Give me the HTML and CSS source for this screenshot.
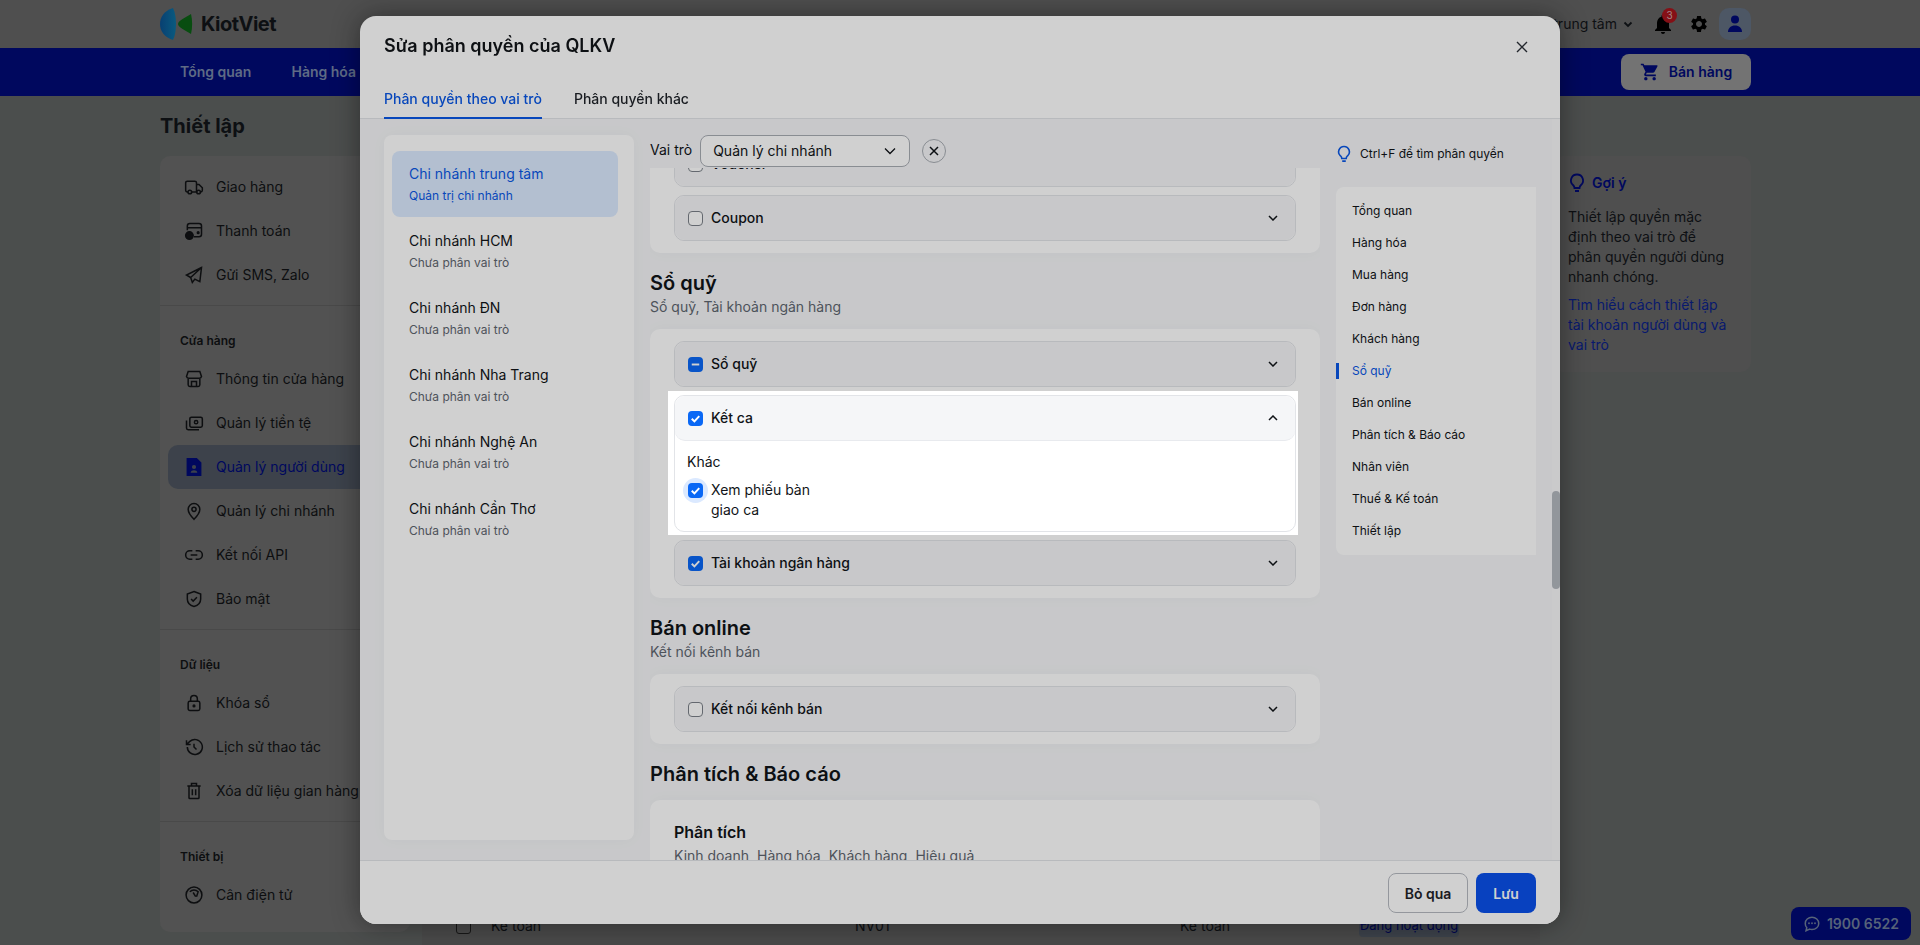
FILE: index.html
```html
<!DOCTYPE html>
<html lang="vi">
<head>
    <meta charset="UTF-8">
    <title>KiotViet - Thiết lập</title>
    <link rel="stylesheet" href="styles.css">
</head>
<body>
    <!-- page behind the dialog -->
    <div class="topbar">
        <div class="logo">
            <svg width="34" height="32" viewBox="0 0 34 32">
                <defs>
                    <linearGradient id="lensBlue" x1="0" y1="0" x2="1" y2="0">
                        <stop offset="0" stop-color="#0b4f8c"/>
                        <stop offset="1" stop-color="#0d6f9c"/>
                    </linearGradient>
                </defs>
                <path d="M13 0C4 3 0 9 0 16s4 13 13 16c4-8 4-24 0-32z" fill="url(#lensBlue)"/>
                <path d="M31 6c-5 3-13 7-13 10s8 7 13 10c1.500-6 1.500-14 0-20z" fill="#0b5f14"/>
            </svg>
            <span class="logo-text">KiotViet</span>
        </div>
        <div class="top-right">
            <span class="branch">Chi nhánh trung tâm
                <svg width="12" height="12" viewBox="0 0 12 12"><path d="M2.500 4.500l3.500 3.500 3.500-3.500" fill="none" stroke="currentColor" stroke-width="1.800"/></svg>
            </span>
            <span class="bell">
                <svg width="24" height="24" viewBox="0 0 24 24"><path d="M12 22c1.1 0 2-.9 2-2h-4c0 1.1.89 2 2 2zm6-6v-5c0-3.07-1.64-5.64-4.5-6.32V4c0-.83-.67-1.5-1.5-1.5s-1.5.67-1.5 1.5v.68C7.63 5.36 6 7.92 6 11v5l-2 2v1h16v-1l-2-2z"/></svg>
                <span class="badge">3</span>
            </span>
            <svg class="gear" width="20" height="20" viewBox="0 0 24 24"><path d="M19.14 12.94c.04-.3.06-.61.06-.94 0-.32-.02-.64-.07-.94l2.03-1.58a.49.49 0 0 0 .12-.61l-1.92-3.32a.488.488 0 0 0-.59-.22l-2.39.96c-.5-.38-1.03-.7-1.62-.94l-.36-2.54a.484.484 0 0 0-.48-.41h-3.84c-.24 0-.43.17-.47.41l-.36 2.54c-.59.24-1.13.57-1.62.94l-2.39-.96c-.22-.08-.47 0-.59.22L2.74 8.87c-.12.21-.08.47.12.61l2.03 1.58c-.05.3-.09.63-.09.94s.02.64.07.94l-2.03 1.58a.49.49 0 0 0-.12.61l1.92 3.32c.12.22.37.29.59.22l2.39-.96c.5.38 1.03.7 1.62.94l.36 2.54c.05.24.24.41.48.41h3.84c.24 0 .44-.17.47-.41l.36-2.54c.59-.24 1.13-.56 1.62-.94l2.39.96c.22.08.47 0 .59-.22l1.92-3.32c.12-.22.07-.47-.12-.61l-2.01-1.58zM12 15.6c-1.98 0-3.6-1.62-3.6-3.6s1.62-3.6 3.6-3.6 3.6 1.62 3.6 3.6-1.62 3.6-3.6 3.6z"/></svg>
            <span class="avatar">
                <svg width="20" height="20" viewBox="0 0 20 20"><circle cx="10" cy="5.500" r="4"/><path d="M3 18c0-4 3-6.500 7-6.500s7 2.500 7 6.500z"/></svg>
            </span>
        </div>
    </div>

    <div class="navbar">
        <a class="nav-link">Tổng quan</a>
        <a class="nav-link">Hàng hóa</a>
        <span class="sell-btn">
            <svg width="20" height="20" viewBox="0 0 24 24"><path d="M7 18c-1.100 0-1.990.9-1.990 2S5.900 22 7 22s2-.9 2-2-.9-2-2-2zM1 2v2h2l3.600 7.590-1.350 2.450c-.16.28-.25.61-.25.96 0 1.100.9 2 2 2h12v-2H7.420c-.14 0-.25-.11-.25-.25l.03-.12.9-1.630h7.450c.75 0 1.410-.41 1.750-1.030l3.580-6.490A1 1 0 0 0 20 4H5.210l-.94-2H1zm16 16c-1.100 0-1.990.9-1.990 2s.89 2 1.990 2 2-.9 2-2-.9-2-2-2z"/></svg>
            Bán hàng
        </span>
    </div>

    <div class="page">
        <h1 class="page-title">Thiết lập</h1>
        <div class="page-grid">
            <div class="side-card">
                <div class="side-group first">
                    <div class="side-item">
                        <svg class="ico" viewBox="0 0 24 24"><path d="M5 18H4a2 2 0 0 1-2-2V7a2 2 0 0 1 2-2h9a2 2 0 0 1 2 2v11H9M15 9h3l4 4v3a2 2 0 0 1-2 2M15 18h-1"/><circle cx="7" cy="18" r="2.200"/><circle cx="17.500" cy="18" r="2.200"/></svg>
                        Giao hàng
                    </div>
                    <div class="side-item">
                        <svg class="ico" viewBox="0 0 24 24"><path d="M4 11V6a3 3 0 0 1 3-3h11a3 3 0 0 1 3 3v10a3 3 0 0 1-3 3h-6M4 8h17"/><circle cx="6.500" cy="17.500" r="4.500" fill="currentColor"/><circle cx="17" cy="14" r="1"/></svg>
                        Thanh toán
                    </div>
                    <div class="side-item">
                        <svg class="ico" viewBox="0 0 24 24"><path d="M21 3L3 12l5 3 2 6 3-4 6 3zM8 15L21 3"/></svg>
                        Gửi SMS, Zalo
                    </div>
                </div>
                <div class="side-group">
                    <div class="side-label">Cửa hàng</div>
                    <div class="side-item">
                        <svg class="ico" viewBox="0 0 24 24"><path d="M5 3h14l2 6a3 3 0 0 1-3 2H6a3 3 0 0 1-3-2zM5 11v8a2 2 0 0 0 2 2h10a2 2 0 0 0 2-2v-8M9 21v-6h6v6"/></svg>
                        Thông tin cửa hàng
                    </div>
                    <div class="side-item">
                        <svg class="ico" viewBox="0 0 24 24"><rect x="7" y="5" width="15" height="12" rx="2"/><circle cx="14.500" cy="11" r="2"/><path d="M3 9v9a2 2 0 0 0 2 2h13"/></svg>
                        Quản lý tiền tệ
                    </div>
                    <div class="side-item active">
                        <svg class="ico" viewBox="0 0 24 24"><path class="solid" d="M4 2h11l5 5v15H4z"/><circle cx="12" cy="12" r="2.500" fill="#4b525d" stroke="none"/><path d="M8 19c0-4 8-4 8 0z" fill="#4b525d" stroke="none"/></svg>
                        Quản lý người dùng
                    </div>
                    <div class="side-item">
                        <svg class="ico" viewBox="0 0 24 24"><path d="M12 22s-7-7-7-12a7 7 0 0 1 14 0c0 5-7 12-7 12z"/><circle cx="12" cy="10" r="2.500"/></svg>
                        Quản lý chi nhánh
                    </div>
                    <div class="side-item">
                        <svg class="ico" viewBox="0 0 24 24"><path d="M10 7H7a5 5 0 0 0 0 10h3M14 7h3a5 5 0 0 1 0 10h-3M8 12h8"/></svg>
                        Kết nối API
                    </div>
                    <div class="side-item">
                        <svg class="ico" viewBox="0 0 24 24"><path d="M12 3l8 3v6c0 5-4 8-8 9-4-1-8-4-8-9V6zM8.500 12l2.500 2.500 4.500-4.500"/></svg>
                        Bảo mật
                    </div>
                </div>
                <div class="side-group">
                    <div class="side-label">Dữ liệu</div>
                    <div class="side-item">
                        <svg class="ico" viewBox="0 0 24 24"><rect x="5" y="10" width="14" height="11" rx="2"/><path d="M8 10V7a4 4 0 0 1 8 0v3"/><circle cx="12" cy="15.500" r="1"/></svg>
                        Khóa sổ
                    </div>
                    <div class="side-item">
                        <svg class="ico" viewBox="0 0 24 24"><path d="M4 12a9 9 0 1 0 3-6.700L3 9M3 4v5h5M12 8v4l3 3"/></svg>
                        Lịch sử thao tác
                    </div>
                    <div class="side-item">
                        <svg class="ico" viewBox="0 0 24 24"><path d="M4 6h16M9 6V3h6v3M6 6v14a1 1 0 0 0 1 1h10a1 1 0 0 0 1-1V6M10 10v7M14 10v7"/></svg>
                        Xóa dữ liệu gian hàng
                    </div>
                </div>
                <div class="side-group last">
                    <div class="side-label">Thiết bị</div>
                    <div class="side-item">
                        <svg class="ico" viewBox="0 0 24 24"><circle cx="12" cy="12" r="9.500"/><path d="M7 8a7 7 0 0 1 10 0l-2 6M11 9l3 5"/></svg>
                        Cân điện tử
                    </div>
                </div>
            </div>

            <div class="table-card">
                <div class="table-row">
                    <span class="row-check"></span>
                    <span class="row-name">Kế toán</span>
                    <span class="row-code">NV01</span>
                    <span class="row-role">Kế toán</span>
                    <span class="row-status">Đang hoạt động</span>
                </div>
            </div>

            <div class="hint-card">
                <div class="hint-title">
                    <svg width="18" height="20" viewBox="0 0 18 20"><path d="M9 1.500a6 6 0 0 0-4 10.500c1 1 1.500 2 1.500 3h5c0-1 .5-2 1.500-3A6 6 0 0 0 9 1.500zM7 18h4" fill="none" stroke="currentColor" stroke-width="1.800"/></svg>
                    Gợi ý
                </div>
                <p class="hint-text">Thiết lập quyền mặc định theo vai trò để phân quyền người dùng nhanh chóng.</p>
                <a class="hint-link">Tìm hiểu cách thiết lập tài khoản người dùng và vai trò</a>
            </div>
        </div>
    </div>

    <div class="phone-btn">
        <svg width="18" height="18" viewBox="0 0 24 24"><path d="M12 3c5 0 9 3.600 9 8.200s-4 8.200-9 8.200c-1 0-2-.1-3-.5L4 21l1-4.200C3.700 15.400 3 13.400 3 11.200 3 6.600 7 3 12 3z" fill="none" stroke="currentColor" stroke-width="2"/><circle cx="8" cy="11" r="1.200" fill="currentColor"/><circle cx="12" cy="11" r="1.200" fill="currentColor"/><circle cx="16" cy="11" r="1.200" fill="currentColor"/></svg>
        1900 6522
    </div>

    <!-- dialog -->
    <div class="modal">
        <div class="modal-head">
            <h2 class="modal-title">Sửa phân quyền của QLKV</h2>
            <svg class="modal-close" width="14" height="14" viewBox="0 0 14 14"><path d="M2 2l10 10M12 2L2 12" fill="none" stroke="currentColor" stroke-width="1.400"/></svg>
            <div class="tabs">
                <div class="tab active">Phân quyền theo vai trò</div>
                <div class="tab">Phân quyền khác</div>
            </div>
        </div>

        <div class="modal-body">
            <div class="branch-list">
                <div class="branch-item active"><div class="branch-name">Chi nhánh trung tâm</div><div class="branch-role">Quản trị chi nhánh</div></div>
                <div class="branch-item"><div class="branch-name">Chi nhánh HCM</div><div class="branch-role">Chưa phân vai trò</div></div>
                <div class="branch-item"><div class="branch-name">Chi nhánh ĐN</div><div class="branch-role">Chưa phân vai trò</div></div>
                <div class="branch-item"><div class="branch-name">Chi nhánh Nha Trang</div><div class="branch-role">Chưa phân vai trò</div></div>
                <div class="branch-item"><div class="branch-name">Chi nhánh Nghệ An</div><div class="branch-role">Chưa phân vai trò</div></div>
                <div class="branch-item"><div class="branch-name">Chi nhánh Cần Thơ</div><div class="branch-role">Chưa phân vai trò</div></div>
            </div>

            <div class="perm-col">
                <div class="role-bar">
                    <span class="role-label">Vai trò</span>
                    <div class="role-select">
                        Quản lý chi nhánh
                        <svg width="14" height="14" viewBox="0 0 14 14"><path d="M2 4.500l5 5 5-5" fill="none" stroke="currentColor" stroke-width="1.300"/></svg>
                    </div>
                    <span class="role-clear">
                        <svg width="10" height="10" viewBox="0 0 10 10"><path d="M1 1l8 8M9 1L1 9" fill="none" stroke="currentColor" stroke-width="1.500"/></svg>
                    </span>
                </div>

                <div class="perm-scroll">
                    <div class="perm-card first">
                        <div class="acc">
                            <div class="acc-head"><span class="check"></span><span class="acc-label">Voucher</span><svg class="chev" viewBox="0 0 10 6"><path d="M1 1l4 4 4-4"/></svg></div>
                        </div>
                        <div class="acc">
                            <div class="acc-head"><span class="check"></span><span class="acc-label">Coupon</span><svg class="chev" viewBox="0 0 10 6"><path d="M1 1l4 4 4-4"/></svg></div>
                        </div>
                    </div>

                    <h3 class="sec-title">Sổ quỹ</h3>
                    <div class="sec-sub">Sổ quỹ, Tài khoản ngân hàng</div>
                    <div class="perm-card">
                        <div class="acc">
                            <div class="acc-head"><span class="check on"><svg viewBox="0 0 14 14"><path d="M3.500 7h7"/></svg></span><span class="acc-label">Sổ quỹ</span><svg class="chev" viewBox="0 0 10 6"><path d="M1 1l4 4 4-4"/></svg></div>
                        </div>
                        <div class="acc open">
                            <div class="acc-head"><span class="check on"><svg viewBox="0 0 14 14"><path d="M3.500 7.200l2.500 2.500 4.500-5"/></svg></span><span class="acc-label">Kết ca</span><svg class="chev" viewBox="0 0 10 6"><path d="M1 5l4-4 4 4"/></svg></div>
                            <div class="acc-body">
                                <div class="acc-group">Khác</div>
                                <div class="perm-opt">
                                    <span class="check on halo"><svg viewBox="0 0 14 14"><path d="M3.500 7.200l2.500 2.500 4.500-5"/></svg></span>
                                    <span class="opt-text">Xem phiếu bàn giao ca</span>
                                </div>
                            </div>
                        </div>
                        <div class="acc">
                            <div class="acc-head"><span class="check on"><svg viewBox="0 0 14 14"><path d="M3.500 7.200l2.500 2.500 4.500-5"/></svg></span><span class="acc-label">Tài khoản ngân hàng</span><svg class="chev" viewBox="0 0 10 6"><path d="M1 1l4 4 4-4"/></svg></div>
                        </div>
                    </div>

                    <h3 class="sec-title">Bán online</h3>
                    <div class="sec-sub">Kết nối kênh bán</div>
                    <div class="perm-card">
                        <div class="acc">
                            <div class="acc-head"><span class="check"></span><span class="acc-label">Kết nối kênh bán</span><svg class="chev" viewBox="0 0 10 6"><path d="M1 1l4 4 4-4"/></svg></div>
                        </div>
                    </div>

                    <h3 class="sec-title">Phân tích &amp; Báo cáo</h3>
                    <div class="perm-card plain">
                        <div class="plain-title">Phân tích</div>
                        <div class="plain-sub">Kinh doanh, Hàng hóa, Khách hàng, Hiệu quả</div>
                    </div>
                </div>
            </div>

            <div class="jump-col">
                <div class="jump-tip">
                    <svg width="16" height="18" viewBox="0 0 18 20"><path d="M9 1.500a6 6 0 0 0-4 10.500c1 1 1.500 2 1.500 3h5c0-1 .5-2 1.500-3A6 6 0 0 0 9 1.500zM7 18h4" fill="none" stroke="currentColor" stroke-width="1.800"/></svg>
                    <span>Ctrl+F để tìm phân quyền</span>
                </div>
                <div class="jump-card">
                    <div class="jump-item">Tổng quan</div>
                    <div class="jump-item">Hàng hóa</div>
                    <div class="jump-item">Mua hàng</div>
                    <div class="jump-item">Đơn hàng</div>
                    <div class="jump-item">Khách hàng</div>
                    <div class="jump-item active">Sổ quỹ</div>
                    <div class="jump-item">Bán online</div>
                    <div class="jump-item">Phân tích &amp; Báo cáo</div>
                    <div class="jump-item">Nhân viên</div>
                    <div class="jump-item">Thuế &amp; Kế toán</div>
                    <div class="jump-item">Thiết lập</div>
                </div>
            </div>

            <div class="scrollbar"><div class="scroll-thumb"></div></div>
        </div>

        <div class="modal-foot">
            <button class="btn">Bỏ qua</button>
            <button class="btn primary">Lưu</button>
        </div>
    </div>

    <!-- tour highlight around Ket ca -->
    <div class="spot"></div>
</body>
</html>
```

FILE: styles.css
```css
* {
    margin: 0;
    padding: 0;
    box-sizing: border-box;
}

html, body {
    height: 945px;
    overflow: hidden;
}

body {
    background: #5d605f;
    font-family: Inter, "Noto Sans", sans-serif;
    font-size: 14px;
    line-height: 20px;
    color: #111418;
}

/* page behind the dialog */
.topbar {
    height: 48px;
    padding: 0 169px 0 160px;
    background: #616161;
    display: flex;
    align-items: center;
    justify-content: space-between;
}

.logo {
    display: flex;
    align-items: center;
    gap: 7px;
}

.logo-text {
    font-size: 20px;
    font-weight: 700;
    letter-spacing: -0.5px;
}

.top-right {
    display: flex;
    align-items: center;
}

.branch {
    display: flex;
    align-items: center;
    gap: 5px;
    margin-right: 17px;
}

.bell {
    position: relative;
    display: flex;
    margin-right: 14px;
}

.badge {
    position: absolute;
    top: -4px;
    right: -2px;
    width: 15px;
    height: 15px;
    border-radius: 50%;
    background: #a3141c;
    color: #c9a5a5;
    font-size: 10px;
    line-height: 15px;
    text-align: center;
}

.gear {
    margin-right: 10px;
}

.avatar {
    width: 32px;
    height: 32px;
    border-radius: 10px;
    background: #5f6b7c;
    display: flex;
    align-items: center;
    justify-content: center;
    fill: #000a74;
}

.navbar {
    height: 48px;
    padding: 0 169px 0 180px;
    background: #000a74;
    display: flex;
    align-items: center;
    gap: 40px;
}

.nav-link {
    color: #7483a3;
    font-weight: 600;
}

.sell-btn {
    margin-left: auto;
    width: 130px;
    height: 36px;
    border-radius: 8px;
    background: #8d8d8d;
    color: #000a74;
    font-weight: 600;
    fill: #000a74;
    display: flex;
    align-items: center;
    justify-content: center;
    gap: 9px;
}

.page {
    padding: 16px 169px 0 160px;
}

.page-title {
    font-size: 20px;
    line-height: 28px;
    font-weight: 700;
    margin-bottom: 16px;
}

.page-grid {
    display: grid;
    grid-template-columns: 250px 1118px 199px;
    column-gap: 12px;
    align-items: start;
}

.side-card {
    background: #656565;
    border-radius: 10px;
    color: #101214;
}

.side-group {
    padding: 25px 8px 8px;
    border-bottom: 1px solid #5a5a5a;
}

.side-group.first {
    padding-top: 9px;
}

.side-group.last {
    border-bottom: none;
    padding-bottom: 15px;
}

.side-label {
    padding-left: 12px;
    margin-bottom: 6px;
    font-size: 12px;
    font-weight: 600;
}

.side-item {
    height: 44px;
    padding-left: 16px;
    border-radius: 10px;
    display: flex;
    align-items: center;
    gap: 12px;
    white-space: nowrap;
}

.side-item.active {
    background: #4b525d;
    color: #000a74;
}

.ico {
    width: 20px;
    height: 20px;
    flex: none;
    fill: none;
    stroke: currentColor;
    stroke-width: 1.800;
}

.ico .solid {
    fill: currentColor;
}

.table-card {
    height: 792px;
    background: #5b5b5b;
    display: flex;
    align-items: flex-end;
}

.table-row {
    width: 100%;
    height: 44px;
    display: grid;
    grid-template-columns: 35px 364px 325px 179px auto;
    align-items: center;
    padding-left: 34px;
}

.row-check {
    width: 15px;
    height: 15px;
    border: 1px solid #1d1d1d;
    border-radius: 3px;
}

.row-status {
    width: 100px;
    height: 22px;
    background: #4b525d;
    border-radius: 4px;
    color: #00085f;
    font-size: 13px;
    text-align: center;
    white-space: nowrap;
}

.hint-card {
    height: 216px;
    padding: 17px 22px 16px 16px;
    background: #616161;
    border-radius: 10px;
}

.hint-title {
    display: flex;
    align-items: center;
    gap: 6px;
    margin-bottom: 14px;
    color: #000a74;
    font-weight: 600;
}

.hint-text {
    margin-bottom: 8px;
}

.hint-link {
    color: #0a1f86;
}

.phone-btn {
    position: fixed;
    left: 1791px;
    top: 907px;
    width: 120px;
    height: 33px;
    border-radius: 8px;
    background: #000a74;
    color: #6b7a95;
    font-weight: 600;
    display: flex;
    align-items: center;
    justify-content: center;
    gap: 6px;
}

/* dialog */
.modal {
    position: fixed;
    left: 360px;
    top: 16px;
    width: 1200px;
    height: 908px;
    background: #fff;
    border-radius: 16px;
    box-shadow: 0 0 28px rgba(0, 0, 0, 0.4);
    display: flex;
    flex-direction: column;
    overflow: hidden;
}

.modal-head {
    position: relative;
    padding: 16px 24px 0;
    border-bottom: 1px solid #e2e4e8;
}

.modal-title {
    font-size: 18px;
    line-height: 28px;
    font-weight: 600;
    margin-bottom: 21px;
}

.modal-close {
    position: absolute;
    right: 31px;
    top: 24px;
    color: #2a2f36;
}

.tabs {
    display: flex;
    gap: 32px;
    margin-bottom: -1px;
}

.tab {
    height: 38px;
    padding-top: 8px;
    font-weight: 500;
    color: #1f2329;
}

.tab.active {
    color: #0a58e6;
    border-bottom: 2px solid #0a58e6;
}

.modal-body {
    position: relative;
    flex: 1;
    min-height: 0;
    padding: 16px 24px 0;
    background: #f5f6f8;
    display: flex;
    gap: 16px;
}

.branch-list {
    width: 250px;
    height: 705px;
    padding: 16px 16px 0 8px;
    background: #fff;
    border-radius: 8px;
    box-shadow: 0 0 16px rgba(0, 0, 0, 0.03);
}

.branch-item {
    height: 67px;
    padding: 13px 17px 0;
}

.branch-item.active {
    height: 66px;
    margin-bottom: 1px;
    background: #dcebff;
    border-radius: 8px;
    color: #0a58e6;
}

.branch-name {
    margin-bottom: 3px;
}

.branch-role {
    font-size: 12px;
    line-height: 18px;
    color: #5f6670;
}

.active .branch-role {
    color: #0a58e6;
}

.perm-col {
    width: 670px;
    display: flex;
    flex-direction: column;
}

.role-bar {
    height: 33px;
    display: flex;
    align-items: flex-start;
    gap: 8px;
}

.role-label {
    line-height: 30px;
}

.role-select {
    width: 210px;
    height: 32px;
    padding: 0 12px;
    border: 1px solid #a9adb4;
    border-radius: 8px;
    background: #fff;
    display: flex;
    align-items: center;
    justify-content: space-between;
}

.role-clear {
    width: 24px;
    height: 24px;
    margin: 4px 0 0 4px;
    border: 1px solid #a9adb4;
    border-radius: 50%;
    background: #f5f6f8;
    display: flex;
    align-items: center;
    justify-content: center;
}

.perm-scroll {
    flex: 1;
    min-height: 0;
    overflow: hidden;
}

.perm-card {
    padding: 12px 24px;
    background: #fff;
    border-radius: 10px;
    box-shadow: 0 0 16px rgba(0, 0, 0, 0.03);
    display: flex;
    flex-direction: column;
    gap: 8px;
}

.perm-card.first {
    margin-top: -39px;
}

.perm-card.plain {
    display: block;
    padding-top: 20px;
    height: 120px;
}

.plain-title {
    font-size: 16px;
    line-height: 24px;
    font-weight: 600;
}

.plain-sub {
    margin-top: 2px;
    color: #5f6670;
}

.sec-title {
    margin-top: 16px;
    font-size: 20px;
    line-height: 28px;
    font-weight: 600;
}

.sec-sub {
    color: #5f6670;
}

.sec-title + .perm-card,
.sec-sub + .perm-card {
    margin-top: 12px;
}

.acc {
    border: 1px solid #e2e4e8;
    border-radius: 10px;
    background: #fff;
}

.acc-head {
    height: 44px;
    padding: 0 17px 0 13px;
    background: #f5f6f8;
    border-radius: 10px;
    display: flex;
    align-items: center;
    gap: 8px;
}

.acc.open .acc-head {
    height: 45px;
    border-bottom: 1px solid #e8eaee;
}

.acc-label {
    font-weight: 500;
    flex: 1;
}

.chev {
    width: 10px;
    height: 6px;
    fill: none;
    stroke: #111418;
    stroke-width: 1.500;
}

.check {
    position: relative;
    width: 15px;
    height: 15px;
    flex: none;
    border: 1px solid #7b8088;
    border-radius: 4px;
    background: #fff;
    display: flex;
}

.check.on {
    border: none;
    background: #0a68f5;
}

.check svg {
    position: relative;
    width: 15px;
    height: 15px;
    fill: none;
    stroke: #fff;
    stroke-width: 1.800;
}

.check.halo {
    margin: 3px 8px 0 1px;
}

.check.halo::before {
    content: "";
    position: absolute;
    left: -5px;
    top: -5px;
    width: 25px;
    height: 25px;
    border-radius: 50%;
    background: #dbe9ff;
}

.check.halo::after {
    content: "";
    position: absolute;
    inset: 0;
    border-radius: 4px;
    background: #0a68f5;
}

.check.halo svg {
    z-index: 1;
}

.acc-body {
    padding: 11px 12px;
}

.acc-group {
    margin-bottom: 8px;
}

.perm-opt {
    display: flex;
    align-items: flex-start;
}

.opt-text {
    width: 110px;
}

.jump-col {
    width: 200px;
}

.jump-tip {
    height: 38px;
    margin-bottom: 14px;
    display: flex;
    align-items: center;
    gap: 8px;
    color: #0a58e6;
}

.jump-tip span {
    color: #111418;
    font-size: 12px;
}

.jump-card {
    padding: 8px 0;
    background: #fff;
    border-radius: 8px 0 0 8px;
}

.jump-item {
    position: relative;
    height: 32px;
    padding-left: 16px;
    font-size: 12px;
    line-height: 32px;
}

.jump-item.active {
    color: #0a58e6;
}

.jump-item.active::before {
    content: "";
    position: absolute;
    left: 0;
    top: 8px;
    width: 3px;
    height: 16px;
    background: #0a58e6;
}

.scrollbar {
    position: absolute;
    top: 0;
    right: 0;
    bottom: 0;
    width: 8px;
    background: #f8f8f9;
}

.scroll-thumb {
    margin-top: 372px;
    height: 98px;
    border-radius: 4px;
    background: #b4b8bf;
}

.modal-foot {
    height: 64px;
    padding: 12px 24px;
    border-top: 1px solid #e2e4e8;
    background: #fff;
    display: flex;
    justify-content: flex-end;
    gap: 8px;
}

.btn {
    width: 80px;
    height: 40px;
    border: 1px solid #b6bac1;
    border-radius: 8px;
    background: #fff;
    color: #1f2329;
    font-family: inherit;
    font-size: 14px;
    font-weight: 600;
}

.btn.primary {
    width: 60px;
    border: none;
    background: #0a50ea;
    color: #fff;
}

/* tour highlight, dims everything else */
.spot {
    position: fixed;
    left: 668px;
    top: 391px;
    width: 630px;
    height: 144px;
    box-shadow: 0 0 0 2000px rgba(0, 0, 0, 0.184);
    pointer-events: none;
}
```
